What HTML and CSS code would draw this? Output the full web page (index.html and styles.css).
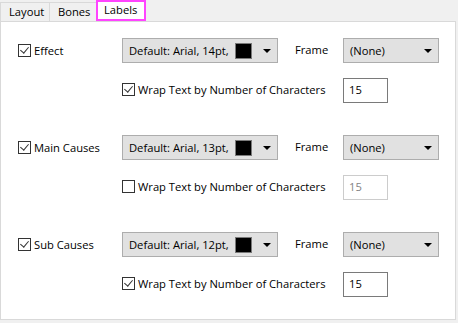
FILE: index.html
```html
<!DOCTYPE html>
<html>
<head>
<meta charset="utf-8">
<link rel="stylesheet" href="styles.css">
</head>
<body>
<div class="tabs">
  <div class="tab">Layout</div>
  <div class="tab">Bones</div>
  <div class="tab active">Labels</div>
</div>
<div class="panel">
  <div class="section">
    <label class="chk main"><span class="box on"></span>Effect</label>
    <div class="combo font"><span>Default: Arial, 14pt,</span><span class="swatch"></span><span class="arrow"></span></div>
    <div class="flabel">Frame</div>
    <div class="combo frame"><span>(None)</span><span class="arrow"></span></div>
    <label class="chk wrap"><span class="box on"></span>Wrap Text by Number of Characters</label>
    <div class="input">15</div>
  </div>
  <div class="section">
    <label class="chk main"><span class="box on"></span>Main Causes</label>
    <div class="combo font"><span>Default: Arial, 13pt,</span><span class="swatch"></span><span class="arrow"></span></div>
    <div class="flabel">Frame</div>
    <div class="combo frame"><span>(None)</span><span class="arrow"></span></div>
    <label class="chk wrap"><span class="box"></span>Wrap Text by Number of Characters</label>
    <div class="input disabled">15</div>
  </div>
  <div class="section">
    <label class="chk main"><span class="box on"></span>Sub Causes</label>
    <div class="combo font"><span>Default: Arial, 12pt,</span><span class="swatch"></span><span class="arrow"></span></div>
    <div class="flabel">Frame</div>
    <div class="combo frame"><span>(None)</span><span class="arrow"></span></div>
    <label class="chk wrap"><span class="box on"></span>Wrap Text by Number of Characters</label>
    <div class="input">15</div>
  </div>
</div>
</body>
</html>
```
FILE: styles.css
```css
* { box-sizing: border-box; }
html, body {
  margin: 0;
  padding: 0;
  background: #f0f0f0;
  width: 458px;
  height: 323px;
  overflow: hidden;
  font-family: "Open Sans", "Noto Sans", "DejaVu Sans", sans-serif;
  font-size: 11.2px;
  color: #000;
}
.tabs {
  display: flex;
  height: 21px;
  align-items: flex-end;
}
.tab {
  height: 19px;
  border: 1px solid #d9d9d9;
  border-bottom: none;
  background: #f0f0f0;
  line-height: 17px;
  padding: 0 7px 0 8px;
  margin-right: -1px;
}
.tab:first-child { width: 50px; }
.tab:nth-child(2) { width: 48px; }
.tab.active {
  height: 21px;
  width: 50px;
  background: #fff;
  border: 2px solid #ff44ff;
  padding-left: 6px;
  line-height: 16px;
  position: relative;
  z-index: 1;
}
.panel {
  width: 456px;
  height: 299px;
  background: #fff;
  border: 1px solid #d9d9d9;
  padding: 16px 0 0 0;
}
.section {
  display: grid;
  grid-template-columns: 17px 104px 156px 17px 48px 96px;
  grid-template-rows: 25px 25px;
  row-gap: 15px;
  margin-bottom: 32px;
  align-items: center;
}
.chk {
  display: flex;
  align-items: center;
  white-space: nowrap;
}
.chk.main { grid-column: 2; grid-row: 1; }
.chk.wrap { grid-column: 3 / 5; grid-row: 2; margin-top: -2px; }
.box {
  width: 13px;
  height: 13px;
  border: 1px solid #333;
  background: #fff;
  margin-right: 3px;
  position: relative;
  flex: none;
}
.box.on::after {
  content: "";
  position: absolute;
  left: 3px;
  top: 0px;
  width: 4px;
  height: 7px;
  border-right: 1.3px solid #333;
  border-bottom: 1.3px solid #333;
  transform: rotate(40deg);
}
.combo {
  height: 25px;
  background: #e1e1e1;
  border: 1px solid #adadad;
  display: flex;
  align-items: center;
  padding-left: 6px;
  grid-row: 1;
  position: relative;
}
.combo.font { grid-column: 3; }
.combo.frame { grid-column: 6; }
.swatch {
  position: absolute;
  left: 112px;
  top: 4px;
  width: 17px;
  height: 16px;
  background: #000;
  border: 1px solid #7a7a7a;
}
.arrow {
  position: absolute;
  right: 6px;
  top: 10px;
  width: 0;
  height: 0;
  border-left: 4px solid transparent;
  border-right: 4px solid transparent;
  border-top: 4px solid #000;
}
.flabel {
  grid-column: 5;
  grid-row: 1;
  padding-left: 0;
  margin-top: -3px;
}
.input {
  grid-column: 6;
  grid-row: 2;
  width: 45px;
  height: 25px;
  border: 1px solid #7a7a7a;
  padding-left: 5px;
  line-height: 22px;
}
.input.disabled {
  border-color: #cccccc;
  color: #838383;
}
```
